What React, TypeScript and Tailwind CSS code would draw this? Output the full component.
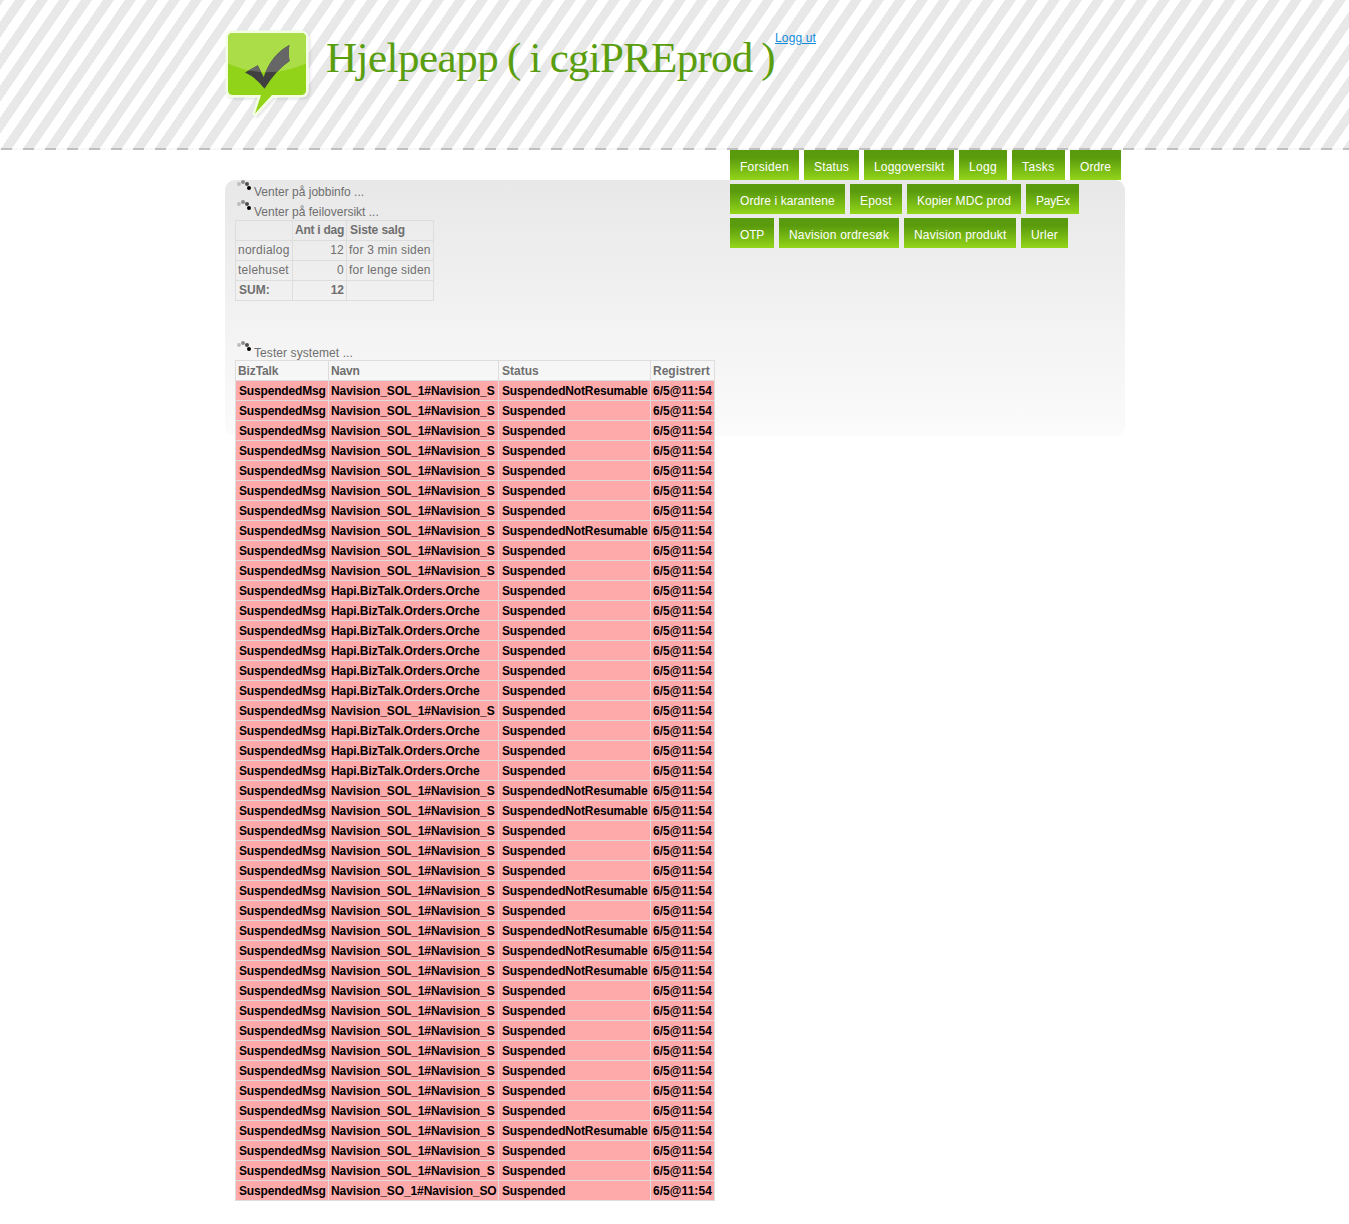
const navItems = [
  ['Forsiden', 'w-[69px] tracking-[0.28px]'],
  ['Status', 'w-[55px] tracking-[0.15px]'],
  ['Loggoversikt', 'w-[90px] tracking-[0.2px]'],
  ['Logg', 'w-[48px] tracking-[0.3px]'],
  ['Tasks', 'w-[53px] tracking-[0.4px]'],
  ['Ordre', 'w-[51px] tracking-[0.05px]'],
  ['Ordre i karantene', 'w-[115px] tracking-[0.08px]'],
  ['Epost', 'w-[52px] tracking-[0.2px]'],
  ['Kopier MDC prod', 'w-[114px] tracking-[0.08px]'],
  ['PayEx', 'w-[53px] tracking-[-0.2px]'],
  ['OTP', 'w-[44px] tracking-[-0.2px]'],
  ['Navision ordresøk', 'w-[120px] tracking-[0.2px]'],
  ['Navision produkt', 'w-[112px] tracking-[0.2px]'],
  ['Urler', 'w-[47px] tracking-[0.2px]'],
];

const notResumable = [0, 7, 20, 21, 25, 27, 28, 29, 37];
const orchestrations = [10, 11, 12, 13, 14, 15, 17, 18, 19];

const messages = Array.from({ length: 41 }, (_, i) => ({
  name: orchestrations.includes(i)
    ? 'Hapi.BizTalk.Orders.Orche'
    : i === 40
      ? 'Navision_SO_1#Navision_SO'
      : 'Navision_SOL_1#Navision_S',
  status: notResumable.includes(i) ? 'SuspendedNotResumable' : 'Suspended',
}));

const bubble = 'M8 5H76Q81 5 81 10V62Q81 67 76 67H47L30 85.5L36 67H8Q3 67 3 62V10Q3 5 8 5Z';
const check = 'M20 44.500L32.700 37.300L38.700 49Q46 27 64.300 17Q63.300 26 64.500 33Q51 42 39.500 60.800Q31 49.500 20 44.500Z';

function Logo() {
  return (
    <svg width="90" height="92" viewBox="0 0 90 92" className="shrink-0">
      <defs>
        <clipPath id="gloss">
          <path d="M3 5H81V35.500Q42 53 3 35.500Z" />
        </clipPath>
        <clipPath id="bubble">
          <path d={bubble} />
        </clipPath>
        <filter id="shadow" x="-10%" y="-10%" width="125%" height="125%">
          <feDropShadow dx="1.5" dy="1.5" stdDeviation="1.5" floodOpacity="0.12" />
        </filter>
      </defs>
      <path d={bubble} fill="#92d41b" stroke="#f3fde3" strokeWidth="5" strokeLinejoin="round" filter="url(#shadow)" />
      <path d={bubble} fill="#91d318" />
      <g clipPath="url(#bubble)">
        <rect width="90" height="60" fill="#aadd48" clipPath="url(#gloss)" />
      </g>
      <path d={check} fill="#404040" />
      <path d={check} fill="#666" clipPath="url(#gloss)" />
    </svg>
  );
}

function Waiting({ text }: { text: string }) {
  return (
    <div className="flex h-5">
      <svg width="19" height="20" viewBox="0 0 19 20" className="shrink-0">
        <circle cx="4" cy="4" r="1.900" fill="#bcbcbc" />
        <circle cx="8" cy="2" r="2" fill="#8c8c8c" />
        <circle cx="12" cy="4" r="2" fill="#4d4d4d" />
        <circle cx="14" cy="8" r="2" fill="#000" />
      </svg>
      <span className="pt-[2px]">{text}</span>
    </div>
  );
}

const cell = 'h-5 border border-[#dddddd] p-0 leading-[19px]';
const messageCell = 'h-5 border border-[#dddddd] p-0 pt-[2px] leading-[17px]';

export default function App() {
  return (
    <div className="h-[1224px] overflow-hidden bg-white font-['Liberation_Sans',Arial,sans-serif] text-[12px] leading-5 text-[#6f6f6f]">
      <header className="flex h-[150px] flex-col bg-[repeating-linear-gradient(124.5deg,#e8e8e8_0px,#e8e8e8_3.1px,#fff_3.5px,#fff_12.16px,#e8e8e8_12.56px,#e8e8e8_18.13px)]">
        <div className="ml-[225px] flex h-[148px] w-[900px] pt-7">
          <Logo />
          <h1 className="ml-[11px] w-[449px] whitespace-nowrap pt-[5px] font-['Liberation_Serif',serif] text-[43px] leading-[50px] tracking-[-0.5px] text-[#5a9e0f] [word-spacing:-1.5px]">
            Hjelpeapp ( i <span className="tracking-[-0.75px]">cgiPREprod</span> )
          </h1>
          <a className="h-5 tracking-[0.15px] text-[#0f8ddb] underline">Logg ut</a>
        </div>
        <div className="h-[2px] bg-[repeating-linear-gradient(90deg,#f8f8f8_0px,#f8f8f8_1px,#c0c0c0_1px,#c0c0c0_12px,#f8f8f8_12px,#f8f8f8_22px)]" />
      </header>
      <main className="ml-[225px] mt-[30px] flex h-[256px] w-[900px] rounded-[10px] bg-linear-to-b from-[#e8e8e8] to-[#fbfbfb] pl-[10px]">
        <section className="w-[495px]">
          <Waiting text="Venter på jobbinfo ..." />
          <Waiting text="Venter på feiloversikt ..." />
          <table className="w-[199px] table-fixed border-collapse whitespace-nowrap">
            <colgroup>
              <col className="w-[57px]" />
              <col className="w-[54px]" />
              <col className="w-[87px]" />
            </colgroup>
            <tbody>
              <tr className="font-bold">
                <td className={cell} />
                <td className={`${cell} pl-[2px] tracking-[-0.25px]`}>Ant i dag</td>
                <td className={`${cell} pl-[3px] tracking-[-0.1px]`}>Siste salg</td>
              </tr>
              <tr className="tracking-[0.25px]">
                <td className={`${cell} pl-[2px]`}>nordialog</td>
                <td className={`${cell} pr-[2px] text-right`}>12</td>
                <td className={`${cell} pl-[2px] tracking-[0.2px]`}>for 3 min siden</td>
              </tr>
              <tr className="tracking-[0.25px]">
                <td className={`${cell} pl-[2px]`}>telehuset</td>
                <td className={`${cell} pr-[2px] text-right`}>0</td>
                <td className={`${cell} pl-[2px] tracking-[0.2px]`}>for lenge siden</td>
              </tr>
              <tr className="font-bold">
                <td className={`${cell} pl-[3px]`}>SUM:</td>
                <td className={`${cell} pr-[2px] text-right`}>12</td>
                <td className={cell} />
              </tr>
            </tbody>
          </table>
          <div className="mt-10 tracking-[0.08px]">
            <Waiting text="Tester systemet ..." />
          </div>
          <table className="-mt-px w-[480px] table-fixed border-collapse whitespace-nowrap font-bold">
            <colgroup>
              <col className="w-[93px]" />
              <col className="w-[170px]" />
              <col className="w-[152px]" />
              <col className="w-[64px]" />
            </colgroup>
            <tbody>
              <tr>
                <td className={`${messageCell} pl-[2px] tracking-[-0.1px]`}>BizTalk</td>
                <td className={`${messageCell} pl-[2px] tracking-[-0.2px]`}>Navn</td>
                <td className={`${messageCell} pl-[3px]`}>Status</td>
                <td className={`${messageCell} pl-[2px]`}>Registrert</td>
              </tr>
              {messages.map((m, i) => (
                <tr key={i} className="bg-[#ffaaaa] text-black">
                  <td className={`${messageCell} pl-[3px] tracking-[-0.17px]`}>SuspendedMsg</td>
                  <td className={`${messageCell} pl-[2px] tracking-[-0.1px]`}>{m.name}</td>
                  <td className={`${messageCell} pl-[3px] tracking-[-0.15px]`}>{m.status}</td>
                  <td className={`${messageCell} pl-[2px] tracking-[0.05px]`}>6/5@11:54</td>
                </tr>
              ))}
            </tbody>
          </table>
        </section>
        <nav className="-mt-[30px] flex h-[98px] w-[395px] flex-wrap content-start gap-x-[5px] gap-y-1 text-white">
          {navItems.map(([label, style]) => (
            <a
              key={label}
              className={`${style} h-[30px] whitespace-nowrap bg-linear-to-b from-[#5a9b0e] from-25% to-[#93d519] pl-[10px] pt-[7px]`}
            >
              {label}
            </a>
          ))}
        </nav>
      </main>
    </div>
  );
}
